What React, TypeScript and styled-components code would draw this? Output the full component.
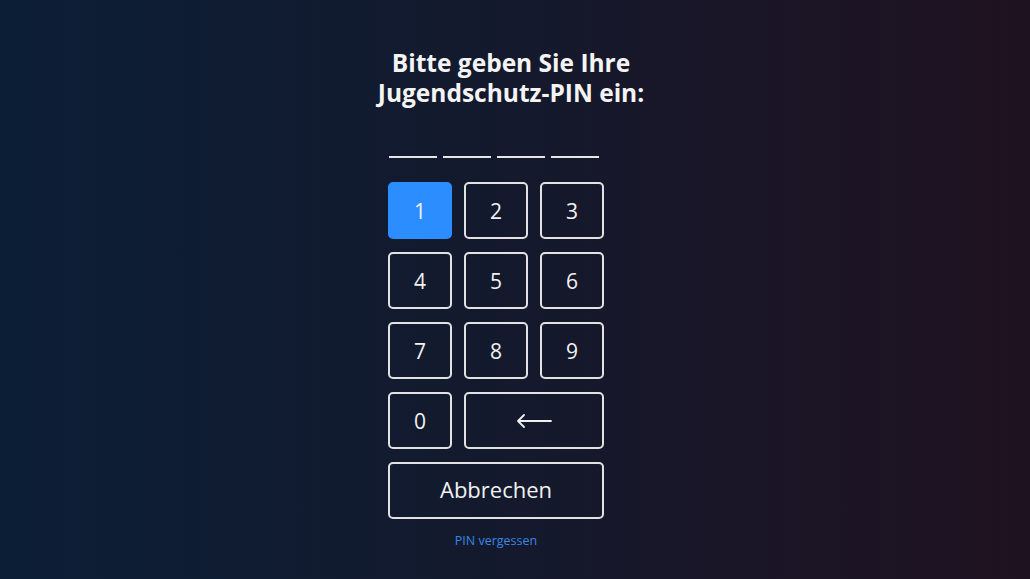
import React, { FC, useState } from "react";
import styled, { createGlobalStyle } from "styled-components";

const GlobalStyle = createGlobalStyle`
  html, body {
    margin: 0;
    padding: 0;
    height: 100%;
  }
  body {
    background: linear-gradient(90deg, #0b1e36 0%, #131a2e 45%, #1a1526 75%, #1f1220 100%);
    font-family: "Open Sans", "Noto Sans", sans-serif;
    color: #f2f2f2;
    overflow: hidden;
  }
`;

const Page = styled.div`
  width: 1030px;
  height: 579px;
  display: flex;
  flex-direction: column;
  padding-top: 48px;
  box-sizing: border-box;
`;

const Title = styled.h1`
  margin: 0 0 0 351px;
  width: 320px;
  text-align: center;
  font-size: 24.5px;
  line-height: 30px;
  font-weight: 700;
  color: #f4f4f4;
`;

const PinRow = styled.div`
  display: flex;
  gap: 6px;
  margin: 48px 0 0 389px;
`;

const PinSlot = styled.span<{ filled: boolean }>`
  width: 48px;
  height: 2px;
  background: ${({ filled }) => (filled ? "#2b8dff" : "#e6e6e6")};
`;

const Pad = styled.div`
  display: grid;
  grid-template-columns: repeat(3, 64px);
  grid-auto-rows: 57px;
  gap: 13px 12px;
  margin: 24px 0 0 388px;
`;

const Key = styled.button<{ active?: boolean; span?: number; wide?: boolean }>`
  grid-column: span ${({ span }) => span || 1};
  box-sizing: border-box;
  border: 2px solid ${({ active }) => (active ? "#2b8dff" : "#e2e2e2")};
  border-radius: 5px;
  background: ${({ active }) => (active ? "#2b8dff" : "transparent")};
  color: #f2f2f2;
  font-family: "Open Sans", "Noto Sans", sans-serif;
  font-size: ${({ wide }) => (wide ? "22px" : "21px")};
  font-weight: 400;
  display: flex;
  align-items: center;
  justify-content: center;
  padding: 0 0 ${({ wide }) => (wide ? "4px" : "0")};
  cursor: pointer;
`;

const Forgot = styled.a`
  margin: 13px 0 0 388px;
  width: 216px;
  text-align: center;
  font-size: 12.5px;
  color: #3b86e0;
  text-decoration: none;
`;

const BackArrow: FC = () => (
  <svg width="36" height="14" viewBox="0 0 36 14" fill="none">
    <path
      d="M35 7H2M8 1L2 7l6 6"
      stroke="#f0f0f0"
      strokeWidth="1.8"
      strokeLinecap="round"
      strokeLinejoin="round"
    />
  </svg>
);

const digits = ["1", "2", "3", "4", "5", "6", "7", "8", "9"];

const App: FC = () => {
  const [pin, setPin] = useState<string>("");
  const [focused, setFocused] = useState<string>("1");

  const press = (d: string) => {
    setFocused(d);
    if (pin.length < 4) setPin(pin + d);
  };

  return (
    <>
      <GlobalStyle />
      <Page>
        <Title>
          Bitte geben Sie Ihre
          <br />
          Jugendschutz-PIN ein:
        </Title>
        <PinRow>
          {[0, 1, 2, 3].map((i) => (
            <PinSlot key={i} filled={i < pin.length} />
          ))}
        </PinRow>
        <Pad>
          {digits.map((d) => (
            <Key key={d} active={focused === d} onClick={() => press(d)}>
              {d}
            </Key>
          ))}
          <Key active={focused === "0"} onClick={() => press("0")}>
            0
          </Key>
          <Key span={2} onClick={() => setPin(pin.slice(0, -1))}>
            <BackArrow />
          </Key>
          <Key span={3} wide onClick={() => setPin("")}>
            Abbrechen
          </Key>
        </Pad>
        <Forgot href="#">PIN vergessen</Forgot>
      </Page>
    </>
  );
};

export default App;
